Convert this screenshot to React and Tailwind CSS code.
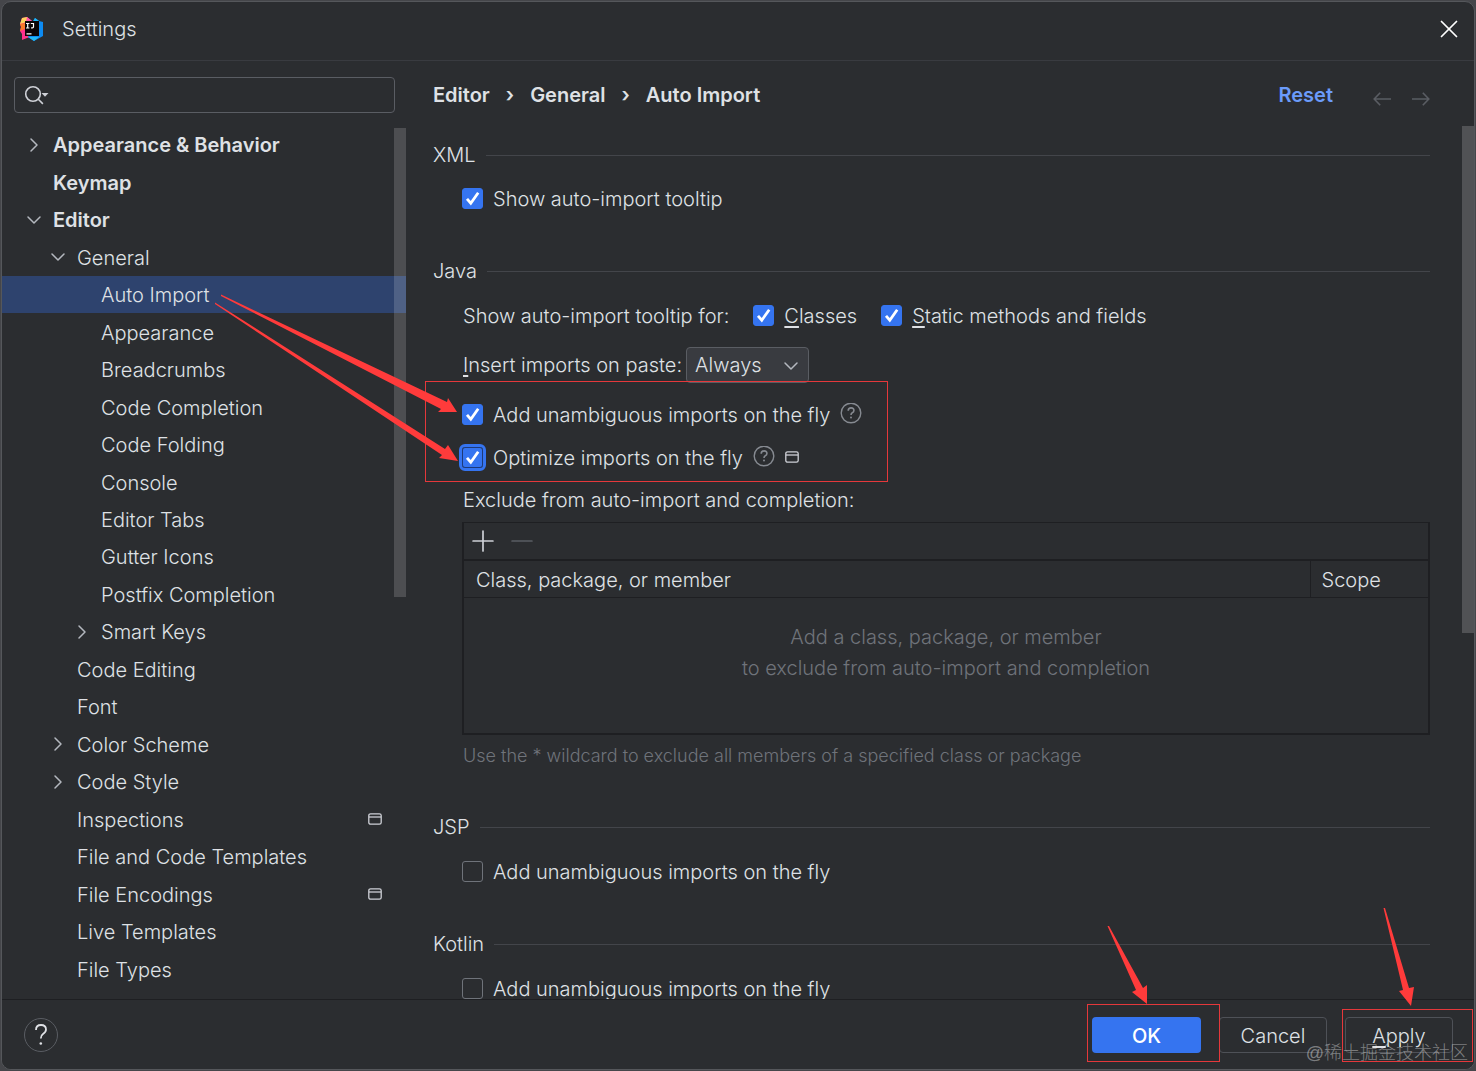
import { Plus, Minus, X, ChevronRight, ChevronDown } from "lucide-react";

const treeItems = [
  { label: "Appearance & Behavior", level: 0, arrow: "right", bold: true },
  { label: "Keymap", level: 0, bold: true },
  { label: "Editor", level: 0, arrow: "down", bold: true },
  { label: "General", level: 1, arrow: "down" },
  { label: "Auto Import", level: 2, selected: true },
  { label: "Appearance", level: 2 },
  { label: "Breadcrumbs", level: 2 },
  { label: "Code Completion", level: 2 },
  { label: "Code Folding", level: 2 },
  { label: "Console", level: 2 },
  { label: "Editor Tabs", level: 2 },
  { label: "Gutter Icons", level: 2 },
  { label: "Postfix Completion", level: 2 },
  { label: "Smart Keys", level: 2, arrow: "right" },
  { label: "Code Editing", level: 1 },
  { label: "Font", level: 1 },
  { label: "Color Scheme", level: 1, arrow: "right" },
  { label: "Code Style", level: 1, arrow: "right" },
  { label: "Inspections", level: 1, project: true },
  { label: "File and Code Templates", level: 1 },
  { label: "File Encodings", level: 1, project: true },
  { label: "Live Templates", level: 1 },
  { label: "File Types", level: 1 },
];

const indents = ["pl-5", "pl-11", "pl-[68px]"];

function Logo() {
  return (
    <svg viewBox="0 0 24 24" className="h-6 w-6" aria-hidden="true">
      <path d="M2 1 L7 0 L12 4 L10 20 L7 21 L2 23 L2 17 L0 14 L1 10 L0 7 Z" fill="#ff318c" />
      <path d="M2 1 L7 0 L8 3 L4 6 L0 7 Z" fill="#fdd35d" />
      <path d="M0 7 L5 6 L5 12 L0 14 L1 10 Z" fill="#fc7a2a" />
      <path d="M7 0 L12 4 L10 6 L6 4 Z" fill="#ff5ba8" />
      <path d="M15 1 L19 4 L23 5 L23 19 L14 24 L8 20 L13 4 Z" fill="#0d8bf2" />
      <path d="M15 1 L19 4 L13 5 Z M8 20 L14 24 L19 20 Z" fill="#21b8f6" />
      <rect x="5" y="4" width="14" height="15" fill="#0b0508" />
      <path d="M6 6.500h3.400M6 11h3.400M7.700 6.500v4.500M10.800 6.500h2.700v3.200q0 1.400-2.400 1.100M6.500 16.800h5" fill="none" stroke="#fff" strokeWidth="1.2" />
    </svg>
  );
}

function ProjectIcon() {
  return (
    <svg viewBox="0 0 14 12" className="h-3 w-3.5 shrink-0" aria-hidden="true">
      <rect x="0.8" y="0.8" width="12.4" height="10.4" rx="1.8" fill="none" stroke="#ced0d6" strokeWidth="1.3" />
      <path d="M1 4h12" stroke="#ced0d6" strokeWidth="1.3" />
    </svg>
  );
}

function HelpIcon() {
  return (
    <svg viewBox="0 0 22 22" className="h-[22px] w-[22px] shrink-0" fill="none" stroke="#868a91" strokeWidth="1.4" aria-hidden="true">
      <circle cx="11" cy="10" r="9.8" />
      <path d="M8.2 7.800q0-2.900 2.900-2.900t2.800 2.600q0 1.500-1.600 2.300-1.300.7-1.300 2.200" strokeWidth="1.6" />
      <circle cx="11" cy="14.600" r="1" fill="#868a91" stroke="none" />
    </svg>
  );
}

function NavArrow({ direction }) {
  return (
    <svg viewBox="0 0 18 14" className="h-3.5 w-[18px]" fill="none" stroke="#5a5d63" strokeWidth="1.6" aria-hidden="true">
      {direction === "back" ? <path d="M18 7H1.200M7.200.8L1.200 7l6 6.200" /> : <path d="M0 7h16.800M10.800.8l6 6.200-6 6.200" />}
    </svg>
  );
}

function TreeItem({ item }) {
  return (
    <li className={`flex items-center ${indents[item.level]} ${item.selected ? "bg-[#2e436e]" : ""}`}>
      <span className="w-[31px] shrink-0">
        {item.arrow === "right" && <ChevronRight size={24} strokeWidth={1.5} className="text-[#b4b8bf]" />}
        {item.arrow === "down" && <ChevronDown size={24} strokeWidth={1.5} className="text-[#b4b8bf]" />}
      </span>
      <span className={item.bold ? "pt-px font-semibold" : "pt-px"}>{item.label}</span>
      {item.project && (
        <span className="mr-6 ml-auto">
          <ProjectIcon />
        </span>
      )}
    </li>
  );
}

function Checkbox({ id, checked, focused, children }) {
  return (
    <label htmlFor={id} className="flex h-6 items-center gap-2.5">
      <span className="relative flex">
        <input
          id={id}
          type="checkbox"
          defaultChecked={checked}
          className={`peer h-[21px] w-[21px] appearance-none rounded-[3px] border border-[#6f737a] checked:border-[#3574f0] checked:bg-[#3574f0] ${
            focused ? "border-[#1e3a78]! outline-3 outline-[#3574f0]" : ""
          }`}
        />
        <svg viewBox="0 0 21 21" className="pointer-events-none absolute inset-0 hidden peer-checked:block" aria-hidden="true">
          <path d="M5 10.800l3.800 4.400L16.200 4.800" fill="none" stroke="#fff" strokeWidth="2.8" />
        </svg>
      </span>
      <span className="pt-0.5">{children}</span>
    </label>
  );
}

function SectionTitle({ children }) {
  return (
    <div className="flex h-6 items-center gap-2.5">
      <h2>{children}</h2>
      <span className="h-px flex-1 bg-[#43454a]" />
    </div>
  );
}

function Sidebar() {
  return (
    <aside className="relative flex w-[404px] shrink-0 flex-col pt-4">
      <div className="mr-[11px] ml-3 flex h-9 items-center rounded-sm border border-[#5a5d63] pl-[9px]">
        <svg viewBox="0 0 28 22" className="h-[22px] w-7" fill="none" stroke="#ced0d6" strokeWidth="1.6" aria-hidden="true">
          <circle cx="9" cy="10" r="7.300" />
          <path d="M14.300 15.300l4.600 4.600" />
          <path d="M17.500 9h7l-3.500 3.800z" fill="#ced0d6" stroke="none" />
        </svg>
        <input type="text" aria-label="Search settings" className="min-w-0 flex-1 bg-transparent outline-none" />
      </div>
      <ul className="mt-[13px] grid flex-1 auto-rows-fr pb-[11px]">
        {treeItems.map((item) => (
          <TreeItem key={item.label} item={item} />
        ))}
      </ul>
      <span className="absolute top-[67px] right-0 h-[469px] w-3 bg-white/16" />
    </aside>
  );
}

function ExcludeTable() {
  return (
    <div className="mr-11 ml-[29px] border-2 border-t border-[#1e1f22]">
      <div className="flex h-9 items-center gap-[5px] pl-0.5">
        <button type="button" aria-label="Add">
          <Plus size={34} strokeWidth={1.2} className="text-[#ced0d6]" />
        </button>
        <button type="button" aria-label="Remove" disabled>
          <Minus size={34} strokeWidth={1.2} className="text-[#5a5d63]" />
        </button>
      </div>
      <table className="w-full border-t-2 border-[#1e1f22] text-left">
        <thead>
          <tr className="h-[37px] border-b border-[#1e1f22]">
            <th className="pt-0.5 pl-3 font-[350]">Class, package, or member</th>
            <th className="w-[118px] border-l border-[#1e1f22] pt-0.5 pl-[11px] font-[350]">Scope</th>
          </tr>
        </thead>
        <tbody>
          <tr className="h-[136px]">
            <td colSpan={2} className="pb-6 text-center leading-[31px] text-[#6f737a]">
              Add a class, package, or member
              <br />
              to exclude from auto-import and completion
            </td>
          </tr>
        </tbody>
      </table>
    </div>
  );
}

function Content() {
  return (
    <main className="relative min-w-0 flex-1 pl-[27px]">
      <div className="mr-11 flex h-[68px] items-center">
        <nav className="flex items-center gap-4 font-semibold" aria-label="Breadcrumb">
          <span>Editor</span>
          <span>›</span>
          <span>General</span>
          <span>›</span>
          <span>Auto Import</span>
        </nav>
        <a href="#reset" className="ml-auto font-semibold text-[#6b9bfa]">Reset</a>
        <div className="mt-2 ml-10 flex gap-[21px]">
          <button type="button" aria-label="Back">
            <NavArrow direction="back" />
          </button>
          <button type="button" aria-label="Forward">
            <NavArrow direction="forward" />
          </button>
        </div>
      </div>

      <section className="mt-[14px] mr-11">
        <SectionTitle>XML</SectionTitle>
        <div className="mt-[19px] ml-[29px] flex">
          <Checkbox id="xml-tooltip" checked>Show auto-import tooltip</Checkbox>
        </div>
      </section>

      <section className="mt-[49px]">
        <div className="mr-11">
          <SectionTitle>Java</SectionTitle>
        </div>
        <div className="mt-5 ml-[30px] flex h-6 items-center gap-6">
          <span className="pt-0.5">Show auto-import tooltip for:</span>
          <Checkbox id="classes" checked><u className="underline-offset-3">C</u>lasses</Checkbox>
          <Checkbox id="static" checked><u className="underline-offset-3">S</u>tatic methods and fields</Checkbox>
        </div>
        <div className="mt-5 ml-[30px] flex h-9 items-center gap-1">
          <label htmlFor="paste"><u className="underline-offset-3">I</u>nsert imports on paste:</label>
          <span className="relative">
            <select id="paste" className="h-9 w-[123px] appearance-none rounded-sm border border-[#5a5d63] bg-[#393b40] pl-2">
              <option>Always</option>
              <option>Ask</option>
              <option>Never</option>
            </select>
            <ChevronDown size={24} strokeWidth={1.5} className="pointer-events-none absolute top-[7px] right-1.5 text-[#b4b8bf]" />
          </span>
        </div>
        <div className="mt-[19px] ml-[29px] flex h-6 items-center gap-2.5">
          <Checkbox id="java-add" checked>Add unambiguous imports on the fly</Checkbox>
          <HelpIcon />
        </div>
        <div className="mt-[19px] ml-[29px] flex h-6 items-center gap-2.5">
          <Checkbox id="java-optimize" checked focused>Optimize imports on the fly</Checkbox>
          <HelpIcon />
          <ProjectIcon />
        </div>
        <p className="mt-[19px] mb-[10px] ml-[30px]">Exclude from auto-import and completion:</p>
        <ExcludeTable />
        <p className="mt-[7px] ml-[30px] text-[18px] leading-7 text-[#6f737a]">
          Use the * wildcard to exclude all members of a specified class or package
        </p>
      </section>

      <section className="mt-[45px] mr-11">
        <SectionTitle>JSP</SectionTitle>
        <div className="mt-5 ml-[29px] flex">
          <Checkbox id="jsp-add">Add unambiguous imports on the fly</Checkbox>
        </div>
      </section>

      <section className="mt-[49px] mr-11">
        <SectionTitle>Kotlin</SectionTitle>
        <div className="mt-5 ml-[29px] flex h-[22px] items-start">
          <Checkbox id="kotlin-add">Add unambiguous imports on the fly</Checkbox>
        </div>
      </section>
      <span className="absolute top-[65px] right-0 h-[507px] w-3 bg-white/18" />
    </main>
  );
}

function Footer() {
  return (
    <footer className="relative flex h-[70px] shrink-0 items-center border-t border-[#1e1f22] bg-[#2b2d30] pr-[21px] pl-[22px]">
      <button type="button" className="flex h-[34px] w-[34px] items-center justify-center rounded-full border border-[#5a5d63]" aria-label="Help">
        <svg viewBox="0 0 20 26" className="h-[26px] w-5" fill="none" stroke="#dfe1e5" strokeWidth="1.8" aria-hidden="true">
          <path d="M5 8q0-5 5-5t5 4.600q0 2.500-3 4.400-2.200 1.500-2.200 4.500" />
          <circle cx="9.800" cy="21.500" r="1.300" fill="#dfe1e5" stroke="none" />
        </svg>
      </button>
      <div className="ml-auto flex gap-[18px]">
        <button type="button" className="h-9 w-[109px] rounded-sm bg-[#3574f0] pt-0.5 font-medium text-white">OK</button>
        <button type="button" className="h-9 w-[108px] rounded-sm border border-[#4e5157] pt-0.5">Cancel</button>
        <button type="button" className="h-9 w-[108px] rounded-sm border border-[#4e5157] pt-0.5">
          <u className="underline-offset-3">A</u>pply
        </button>
      </div>

      <div className="pointer-events-none absolute right-[254px] bottom-[7px] h-[58px] w-[133px] border border-[#e5383b]" />
      <div className="pointer-events-none absolute right-px bottom-[7px] h-[53px] w-[131px] border border-[#e5383b]" />
      <svg viewBox="1100 900 330 110" className="pointer-events-none absolute right-[44px] bottom-[59px] h-[110px] w-[330px]" fill="#ff3b3b" aria-hidden="true">
        <path d="M1107.500 926L1109 926L1143 988L1147 985L1147 1004L1132 992L1136 990Z" />
        <path d="M1383.500 908L1385 908L1409 988L1414 987L1411 1006L1399 991L1403 990Z" />
      </svg>
      <span className="pointer-events-none absolute right-1.5 bottom-1 font-['Liberation_Sans','Noto_Sans_CJK_SC',sans-serif] text-[18px] leading-6 font-light text-white/40">
        @稀土掘金技术社区
      </span>
    </footer>
  );
}

export default function App() {
  return (
    <div className="flex min-h-screen bg-[#45464a] p-px font-['Inter',sans-serif] text-[20px] leading-6 font-[350] text-[#dfe1e5]">
      <div className="relative flex flex-1 flex-col overflow-hidden rounded-[10px] border border-[#55575b] bg-[#2b2d30]">
        <header className="flex h-[59px] shrink-0 items-center border-b border-[#393b40] pr-2.5 pb-1 pl-[18px]">
          <Logo />
          <h1 className="ml-[18px]">Settings</h1>
          <button type="button" className="ml-auto text-white" aria-label="Close">
            <X size={30} strokeWidth={1.4} />
          </button>
        </header>
        <div className="flex flex-1">
          <Sidebar />
          <Content />
        </div>
        <Footer />

        {/* callout from the selected page to the two import options */}
        <div className="pointer-events-none absolute top-[379px] left-[423px] h-[101px] w-[463px] border border-[#e5383b]" />
        <svg viewBox="210 290 250 180" className="pointer-events-none absolute top-[288px] left-[208px] h-[180px] w-[250px]" fill="#ff3b3b" aria-hidden="true">
          <path d="M221 294.500L447 402L448 398L457 412L438 412L441 409L221 296Z" />
          <path d="M215 302.500L445 449L448 445L458 461L439 458L442 455L215 304Z" />
        </svg>
      </div>
    </div>
  );
}
